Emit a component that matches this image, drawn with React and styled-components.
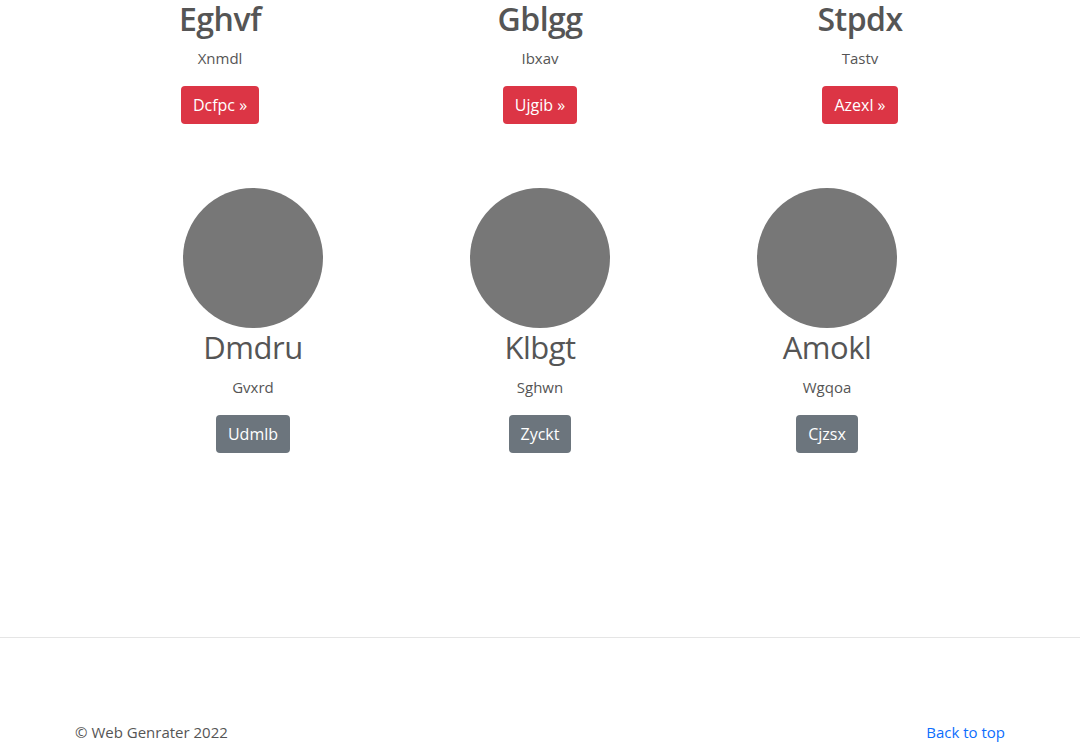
import styled, { createGlobalStyle } from "styled-components";

const GlobalStyle = createGlobalStyle`
  body {
    margin: 0;
    font-family: "Open Sans", "Noto Sans", sans-serif;
    color: #555;
    background: #fff;
  }
`;

const features = [
  { title: "Eghvf", text: "Xnmdl", action: "Dcfpc »" },
  { title: "Gblgg", text: "Ibxav", action: "Ujgib »" },
  { title: "Stpdx", text: "Tastv", action: "Azexl »" },
];

const people = [
  { name: "Dmdru", text: "Gvxrd", action: "Udmlb" },
  { name: "Klbgt", text: "Sghwn", action: "Zyckt" },
  { name: "Amokl", text: "Wgqoa", action: "Cjzsx" },
];

export default function App() {
  return (
    <>
      <GlobalStyle />
      <Page>
        <FeatureRow>
          {features.map((f) => (
            <Column key={f.title}>
              <FeatureTitle>{f.title}</FeatureTitle>
              <Lead $top={12}>{f.text}</Lead>
              <Button $variant="danger">{f.action}</Button>
            </Column>
          ))}
        </FeatureRow>

        <PeopleRow>
          {people.map((p) => (
            <Column key={p.name}>
              <Avatar />
              <PersonName>{p.name}</PersonName>
              <Lead $top={10}>{p.text}</Lead>
              <Button $variant="secondary">{p.action}</Button>
            </Column>
          ))}
        </PeopleRow>
      </Page>

      <Footer>
        <FooterInner>
          <Copy>© Web Genrater 2022</Copy>
          <TopLink href="#">Back to top</TopLink>
        </FooterInner>
      </Footer>
    </>
  );
}

const Page = styled.main`
  height: 637px;
  overflow: hidden;
`;

const FeatureRow = styled.section`
  display: grid;
  grid-template-columns: repeat(3, 1fr);
  width: 960px;
  margin: 0 auto;
`;

const PeopleRow = styled.section`
  display: grid;
  grid-template-columns: repeat(3, 1fr);
  width: 861px;
  margin: 64px auto 0;
`;

const Column = styled.div`
  display: flex;
  flex-direction: column;
  align-items: center;
  text-align: center;
`;

const FeatureTitle = styled.h2`
  margin: 0;
  padding-top: 3px;
  font-size: 32px;
  font-weight: 600;
  line-height: 1;
  letter-spacing: -0.5px;
`;

const PersonName = styled.h2`
  margin: 0;
  font-size: 31px;
  font-weight: 400;
  line-height: 38px;
  letter-spacing: -0.5px;
`;

const Lead = styled.p`
  margin: ${(p) => p.$top}px 0 17px;
  font-size: 15px;
  line-height: 22px;
`;

const Button = styled.a`
  display: inline-block;
  padding: 7px 12px;
  font-size: 16px;
  line-height: 24px;
  border-radius: 4px;
  color: #fff;
  background: ${(p) => (p.$variant === "danger" ? "#dc3545" : "#6c757d")};
  cursor: pointer;
`;

const Avatar = styled.div`
  width: 140px;
  height: 140px;
  border-radius: 50%;
  background: #777;
`;

const Footer = styled.footer`
  border-top: 1px solid #e5e5e5;
  padding-top: 84px;
`;

const FooterInner = styled.div`
  display: flex;
  justify-content: space-between;
  width: 930px;
  margin: 0 auto;
  font-size: 15px;
`;

const Copy = styled.span`
  color: #555;
`;

const TopLink = styled.a`
  color: #0d6efd;
  text-decoration: none;
`;
